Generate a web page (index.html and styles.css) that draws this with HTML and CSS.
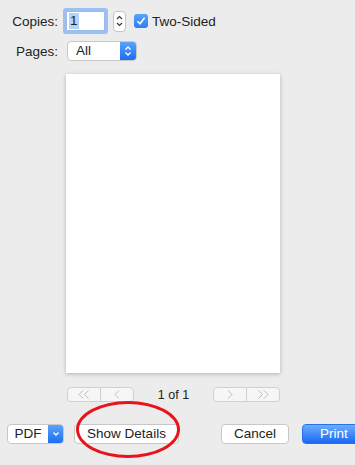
FILE: index.html
```html
<!DOCTYPE html>
<html lang="en">
<head>
    <meta charset="UTF-8">
    <title>Print</title>
    <link rel="stylesheet" href="styles.css">
</head>
<body>
    <div class="form">
        <label class="lbl">Copies:</label>
        <div class="ctl">
            <span class="copies"><span class="sel">1</span></span>
            <span class="stepper">
                <svg width="7" height="14" viewBox="0 0 7 14"><path d="M1 5 L3.5 2.5 L6 5 M1 9 L3.5 11.5 L6 9" fill="none" stroke="#333" stroke-width="1.1"/></svg>
            </span>
            <span class="check">
                <svg width="10" height="10" viewBox="0 0 10 10"><path d="M1.5 5.2 L4 7.8 L8.6 1.8" fill="none" stroke="#fff" stroke-width="1.6"/></svg>
            </span>
            <span class="check-text">Two-Sided</span>
        </div>
        <label class="lbl">Pages:</label>
        <div class="ctl">
            <span class="popup">
                <span class="popup-text">All</span>
                <span class="popup-arrow">
                    <svg width="8" height="12" viewBox="0 0 8 12"><path d="M1.5 4.5 L4 2 L6.5 4.5 M1.5 7.5 L4 10 L6.5 7.5" fill="none" stroke="#fff" stroke-width="1.3"/></svg>
                </span>
            </span>
        </div>
    </div>

    <div class="preview">
        <div class="paper"></div>
        <div class="nav">
            <span class="seg">
                <span class="seg-btn">
                    <svg width="12" height="9" viewBox="0 0 12 9"><path d="M5 0.5 L1 4.5 L5 8.5 M10.5 0.5 L6.5 4.5 L10.5 8.5" fill="none" stroke="#bcbcbc" stroke-width="1"/></svg>
                </span>
                <span class="seg-btn">
                    <svg width="6" height="9" viewBox="0 0 6 9"><path d="M5 0.5 L1 4.5 L5 8.5" fill="none" stroke="#bcbcbc" stroke-width="1"/></svg>
                </span>
            </span>
            <span class="page-no">1 of 1</span>
            <span class="seg">
                <span class="seg-btn">
                    <svg width="6" height="9" viewBox="0 0 6 9"><path d="M1 0.5 L5 4.5 L1 8.5" fill="none" stroke="#bcbcbc" stroke-width="1"/></svg>
                </span>
                <span class="seg-btn">
                    <svg width="12" height="9" viewBox="0 0 12 9"><path d="M1.5 0.5 L5.5 4.5 L1.5 8.5 M7 0.5 L11 4.5 L7 8.5" fill="none" stroke="#bcbcbc" stroke-width="1"/></svg>
                </span>
            </span>
        </div>
    </div>

    <div class="buttons">
        <span class="pdf">
            <span class="pdf-text">PDF</span>
            <span class="pdf-arrow">
                <svg width="8" height="6" viewBox="0 0 8 6"><path d="M1.5 1.5 L4 4 L6.5 1.5" fill="none" stroke="#fff" stroke-width="1.3"/></svg>
            </span>
        </span>
        <span class="btn details">Show Details</span>
        <span class="spacer"></span>
        <span class="btn cancel">Cancel</span>
        <span class="btn print">Print</span>
        <span class="circle"></span>
    </div>
</body>
</html>
```

FILE: styles.css
```css
body {
    margin: 0;
    width: 355px;
    height: 465px;
    overflow: hidden;
    background: #ececec;
    font-family: "Liberation Sans", Arial, sans-serif;
    font-size: 13.5px;
    color: #222;
    position: relative;
}
.form {
    display: grid;
    grid-template-columns: 58px auto;
    grid-auto-rows: 30px;
    column-gap: 8px;
    align-items: center;
    padding-top: 6px;
}
.lbl {
    text-align: right;
}
.ctl {
    display: flex;
    align-items: center;
}
.copies {
    width: 39px;
    height: 20px;
    box-sizing: border-box;
    background: #fff;
    border: 1px solid #9dbbe8;
    box-shadow: 0 0 0 3px #9cc0f2;
    border-radius: 1px;
    display: flex;
    align-items: center;
    padding-left: 2px;
}
.sel {
    background: #b4d3f6;
    padding: 0 1px;
    line-height: 16px;
}
.stepper {
    margin-left: 8px;
    width: 13px;
    height: 21px;
    box-sizing: border-box;
    background: #fff;
    border: 1px solid #c4c4c4;
    border-radius: 4px;
    display: flex;
    align-items: center;
    justify-content: center;
}
.check {
    margin-left: 8px;
    width: 14px;
    height: 14px;
    border-radius: 3px;
    background: linear-gradient(#5aa2fb, #2f7df5);
    display: flex;
    align-items: center;
    justify-content: center;
}
.check-text {
    margin-left: 4px;
}
.popup {
    margin-left: 1px;
    width: 70px;
    height: 20px;
    box-sizing: border-box;
    border: 1px solid #c8c8c8;
    border-radius: 4px;
    background: #fff;
    display: flex;
    overflow: hidden;
}
.popup-text {
    flex: 1;
    padding-left: 8px;
    line-height: 18px;
}
.popup-arrow {
    width: 16px;
    background: linear-gradient(#5aa2fb, #1e6ef2);
    display: flex;
    align-items: center;
    justify-content: center;
}
.preview {
    width: 214px;
    margin: 8px 0 0 66px;
}
.paper {
    height: 299px;
    background: #fff;
    box-shadow: 0 1px 4px rgba(0, 0, 0, 0.25);
}
.nav {
    margin-top: 14px;
    display: flex;
    align-items: center;
    justify-content: space-between;
    padding-left: 1px;
}
.seg {
    display: flex;
    width: 67px;
    height: 15px;
    box-sizing: border-box;
    border: 1px solid #d0d0d0;
    border-radius: 4px;
    background: #f6f6f6;
}
.seg-btn {
    flex: 1;
    display: flex;
    align-items: center;
    justify-content: center;
}
.seg-btn + .seg-btn {
    border-left: 1px solid #d0d0d0;
}
.page-no {
    font-size: 12.5px;
}
.buttons {
    display: flex;
    align-items: center;
    margin-top: 22px;
    padding-left: 7px;
}
.pdf {
    display: flex;
    width: 57px;
    height: 20px;
    box-sizing: border-box;
    border: 1px solid #c8c8c8;
    border-radius: 4px;
    background: #fff;
    overflow: hidden;
}
.pdf-text {
    flex: 1;
    text-align: center;
    line-height: 18px;
}
.pdf-arrow {
    width: 15px;
    background: linear-gradient(#5aa2fb, #1e6ef2);
    display: flex;
    align-items: center;
    justify-content: center;
}
.btn {
    height: 20px;
    box-sizing: border-box;
    border: 1px solid #c8c8c8;
    border-radius: 4px;
    background: #fff;
    line-height: 18px;
    text-align: center;
}
.details {
    margin-left: 10px;
    width: 105px;
}
.spacer {
    flex: 1;
}
.cancel {
    width: 68px;
}
.print {
    margin-left: 13px;
    width: 64px;
    margin-right: -11px;
    border-color: #2a6ff0;
    background: linear-gradient(#6aaefc, #1a68f3);
    color: #fff;
}
.circle {
    position: absolute;
    left: 76px;
    top: 401px;
    width: 104px;
    height: 57px;
    box-sizing: border-box;
    border: 3px solid #e8141a;
    border-radius: 50%;
}
```
